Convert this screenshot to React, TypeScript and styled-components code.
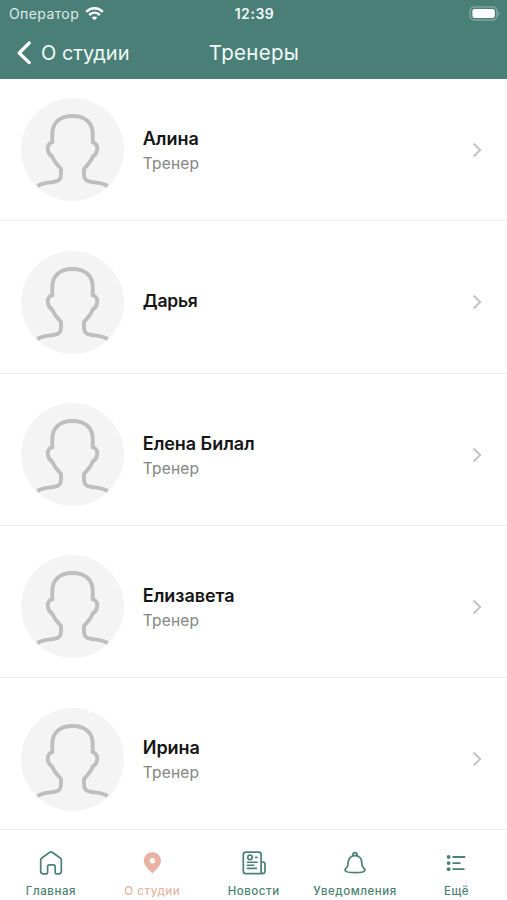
import React from "react";
import styled, { createGlobalStyle } from "styled-components";

const GREEN = "#4a7f77";
const PINK = "#e9b3a3";

const GlobalStyle = createGlobalStyle`
  * { box-sizing: border-box; }
  body { margin: 0; background: #fff; font-family: Inter, "Noto Sans", sans-serif; }
  svg { display: block; flex: none; }
`;

const Screen = styled.div`
  width: 507px;
  height: 900px;
  display: flex;
  flex-direction: column;
  overflow: hidden;
  background: #fff;
`;

const Header = styled.header`
  height: 79px;
  flex: none;
  background: ${GREEN};
  color: #f0faf8;
`;

const StatusBar = styled.div`
  height: 27px;
  display: grid;
  grid-template-columns: 1fr auto 1fr;
  align-items: center;
  padding: 0 7px 0 9px;
`;

const Carrier = styled.div`
  display: flex;
  align-items: center;
  gap: 6px;
  font-size: 14px;
  line-height: 20px;
  letter-spacing: 0.4px;
  color: #dcebe8;
`;

const Clock = styled.div`
  font-size: 14px;
  line-height: 20px;
  font-weight: 600;
  letter-spacing: 0.55px;
`;

const Battery = styled.div`
  justify-self: end;
`;

const NavBar = styled.nav`
  height: 51px;
  display: grid;
  grid-template-columns: 1fr auto 1fr;
  align-items: center;
  padding: 0 16px;
`;

const Back = styled.div`
  display: flex;
  align-items: center;
  gap: 9px;
  font-size: 20px;
  line-height: 28px;
  letter-spacing: 0px;
`;

const Title = styled.div`
  font-size: 20.5px;
  line-height: 28px;
  letter-spacing: 0.3px;
  padding-left: 1px;
`;

const List = styled.main`
  flex: 1;
`;

const Row = styled.div`
  display: flex;
  align-items: center;
  height: 152.3px;
  padding: 10.6px 24px 0 20.6px;
  border-bottom: 1px solid #efefef;
  &:first-child { height: 142.3px; padding-top: 0.6px; }
`;

const Avatar = styled.div`
  width: 103px;
  height: 103px;
  flex: none;
  border-radius: 50%;
  background: #f4f4f4;
`;

const Info = styled.div`
  flex: 1;
  margin-left: 19.2px;
`;

const Name = styled.div<{ $alone?: boolean }>`
  font-size: ${(p) => (p.$alone ? "17.5px" : "18px")};
  line-height: 26px;
  font-weight: 600;
  letter-spacing: ${(p) => (p.$alone ? "-0.25px" : "-0.05px")};
  padding-bottom: ${(p) => (p.$alone ? "3px" : "0")};
  color: #151515;
`;

const Role = styled.div`
  font-size: 15.5px;
  line-height: 22px;
  margin: 1px 0 -1px;
  letter-spacing: 0.15px;
  color: #858585;
`;

const TabBar = styled.footer`
  height: 70px;
  flex: none;
  display: grid;
  grid-template-columns: repeat(5, 1fr);
  background: #fff;
`;

const Tab = styled.div<{ $active?: boolean }>`
  display: flex;
  flex-direction: column;
  align-items: center;
  padding: 19px 0 0 0.4px;
  gap: 6px;
  font-size: 11.5px;
  line-height: 16px;
  font-weight: 500;
  letter-spacing: 0.55px;
  white-space: nowrap;
  color: ${(p) => (p.$active ? PINK : "#4b8172")};
`;

const Wifi = () => (
  <svg width="19" height="14" viewBox="0 0 19 14" fill="none" stroke="#fff" strokeWidth="2.5">
    <path d="M1.2 4.8C6 .1 13 .1 17.8 4.8M4.2 8C7.3 5.1 11.7 5.1 14.8 8" />
    <path d="M9.5 13.3 6.7 10.5C8.3 9.1 10.7 9.1 12.3 10.5Z" fill="#fff" stroke="none" />
  </svg>
);

const BatteryIcon = () => (
  <svg width="31" height="15" viewBox="0 0 31 15">
    <rect x="1.2" y=".9" width="26.6" height="13" rx="4" fill="none" stroke="#7fa69f" strokeWidth="1.5" />
    <rect x="3.4" y="3" width="22.4" height="8.9" rx="2.2" fill="#fff" />
    <path d="M29 5.2C31 6 31 9 29 9.8Z" fill="#7fa69f" />
  </svg>
);

const BackIcon = () => (
  <svg width="16" height="24" viewBox="0 0 16 24" fill="none" stroke="#fff" strokeWidth="3.2" strokeLinecap="round" strokeLinejoin="round">
    <path d="M13.2 2 3.2 12 13.2 21.6" />
  </svg>
);

const Person = () => (
  <svg width="103" height="103" viewBox="0 0 103 103" fill="none" stroke="#bebebe" strokeWidth="3.9" strokeLinejoin="round">
    <path d="M16.4 88C22 84.6 28 84.7 32.5 84C38.5 83 40 81 40 76V71C36 66.5 32.5 63 31.3 58.5C27 56.5 25.8 50 27.5 47.2C28.1 45.8 29.5 44.6 31.3 44.4V36C31.3 24.5 39 18 51.5 18S71.7 24.5 71.7 36V44.4C73.5 44.6 74.9 45.8 75.5 47.2C77.2 50 76 56.5 71.7 58.5C70.5 63 67 66.5 63 71V76C63 81 64.5 83 70.5 84C75 84.7 81 84.6 86.6 88" />
  </svg>
);

const Chevron = () => (
  <svg width="12" height="16" viewBox="0 0 12 16" fill="none" stroke="#c4c4c4" strokeWidth="2">
    <path d="M2.6 1.5 9.2 8 2.6 14.5" />
  </svg>
);

const tabIcon = { width: 26, height: 28, viewBox: "0 0 26 28", fill: "none", stroke: "currentColor", strokeWidth: 1.7, strokeLinecap: "round", strokeLinejoin: "round" } as const;

const HomeIcon = () => (
  <svg {...tabIcon}>
    <path d="M2.7 11.2Q2.7 9.8 3.8 9L11.8 3.3Q13 2.4 14.2 3.3L22.2 9Q23.3 9.8 23.3 11.2V22.3Q23.3 24.8 20.8 24.8H18.6Q17.2 24.8 17.2 23.4V17.6Q17.2 15.8 15.4 15.8H11.4Q9.6 15.8 9.6 17.6V23.4Q9.6 24.8 8.2 24.8H5.2Q2.7 24.8 2.7 22.3Z" />
  </svg>
);

const PinIcon = () => (
  <svg {...tabIcon}>
    <path d="M13.4 24.4C11.8 22.2 4.8 17.4 4.8 11.7A8.6 8.6 0 0 1 22 11.7C22 17.4 15 22.2 13.4 24.4Z" fill="currentColor" stroke="none" />
    <circle cx="13.4" cy="11.8" r="2.7" fill="#fff" stroke="none" />
  </svg>
);

const NewsIcon = () => (
  <svg {...tabIcon}>
    <path d="M20.1 13V5.6Q20.1 3.1 17.6 3.1H5Q2.3 3.1 2.3 5.6V22Q2.3 24.7 5 24.7H21.2Q24 24.7 24 22V15.2Q24 13.2 22 13.2H20.1V22.8Q20.1 24.7 22 24.7" />
    <circle cx="9" cy="8.4" r="2.2" />
    <path d="M14.5 8.4H16M6.5 13.2H16M6.5 16.2H12.8M6.5 19.4H15.4" strokeWidth="1.6" />
  </svg>
);

const BellIcon = () => (
  <svg {...tabIcon}>
    <path d="M10.8 6.2Q11 3.6 13 3.6T15.2 6.2M8.8 8Q13 5.3 17.2 8C20 9.4 19.6 13.7 20.3 16.7C20.8 18.8 23 19.4 23 21C23 24.6 3 24.6 3 21C3 19.4 5.2 18.8 5.7 16.7C6.4 13.7 6 9.4 8.8 8Z" />
  </svg>
);

const ListIcon = () => (
  <svg {...tabIcon}>
    <path d="M10.2 8H21.5M10.2 14.1H16.8M10.2 20.2H20.8" strokeWidth="1.8" />
    <g fill="currentColor" stroke="none">
      <circle cx="5.6" cy="8" r="1.9" />
      <circle cx="5.6" cy="14.1" r="1.9" />
      <circle cx="5.6" cy="20.2" r="1.9" />
    </g>
  </svg>
);

const trainers = [
  { name: "Алина", role: "Тренер" },
  { name: "Дарья" },
  { name: "Елена Билал", role: "Тренер" },
  { name: "Елизавета", role: "Тренер" },
  { name: "Ирина", role: "Тренер" },
];

const tabs = [
  { label: "Главная", Icon: HomeIcon },
  { label: "О студии", Icon: PinIcon, active: true },
  { label: "Новости", Icon: NewsIcon },
  { label: "Уведомления", Icon: BellIcon },
  { label: "Ещё", Icon: ListIcon },
];

export default function App() {
  return (
    <Screen>
      <GlobalStyle />
      <Header>
        <StatusBar>
          <Carrier>Оператор <Wifi /></Carrier>
          <Clock>12:39</Clock>
          <Battery><BatteryIcon /></Battery>
        </StatusBar>
        <NavBar>
          <Back><BackIcon />О студии</Back>
          <Title>Тренеры</Title>
        </NavBar>
      </Header>
      <List>
        {trainers.map((t) => (
          <Row key={t.name}>
            <Avatar><Person /></Avatar>
            <Info>
              <Name $alone={!t.role}>{t.name}</Name>
              {t.role && <Role>{t.role}</Role>}
            </Info>
            <Chevron />
          </Row>
        ))}
      </List>
      <TabBar>
        {tabs.map(({ label, Icon, active }) => (
          <Tab key={label} $active={active}><Icon />{label}</Tab>
        ))}
      </TabBar>
    </Screen>
  );
}
